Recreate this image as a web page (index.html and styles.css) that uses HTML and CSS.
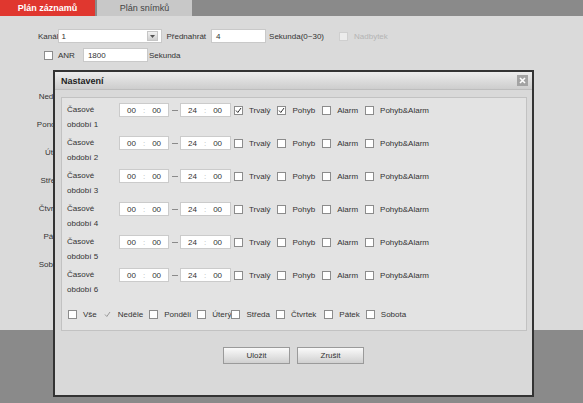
FILE: index.html
```html
<!DOCTYPE html>
<html lang="cs">
<head>
<meta charset="utf-8">
<title>Plán záznamů</title>
<link rel="stylesheet" href="styles.css">
</head>
<body>
<div class="page">
<div class="tabs">
  <div class="tab active">Plán záznamů</div>
  <div class="tab">Plán snímků</div>
</div>
<div class="content">
  <div class="form-row row1">
    <span class="lbl">Kanál</span>
    <div class="select"><span class="val">1</span><span class="arrow"><svg width="5" height="3" viewBox="0 0 5 3"><path d="M0 0h5L2.5 3z" fill="#555"/></svg></span></div>
    <span class="lbl pre">Přednahrát</span>
    <div class="field pre-field">4</div>
    <span class="lbl sec">Sekunda(0~30)</span>
    <span class="cb disabled extra-cb"></span>
    <span class="lbl muted">Nadbytek</span>
  </div>
  <div class="form-row row2">
    <span class="cb"></span>
    <span class="lbl anr">ANR</span>
    <div class="field anr-field">1800</div>
    <span class="lbl sec2">Sekunda</span>
  </div>
  <div class="days-bg">
    <div>Neděle</div>
    <div>Pondělí</div>
    <div>Úterý</div>
    <div>Středa</div>
    <div>Čtvrtek</div>
    <div>Pátek</div>
    <div>Sobota</div>
  </div>

  <div class="dialog">
    <div class="dlg-title">
      <span>Nastavení</span>
      <span class="close"><svg width="7" height="7" viewBox="0 0 7 7"><path d="M1 1l5 5M6 1L1 6" stroke="#fff" stroke-width="1.6"/></svg></span>
    </div>
    <div class="panel">
      <div class="period">
        <div class="plabel">Časové<br>období 1</div>
        <div class="controls">
          <div class="time"><span>00</span><span class="colon">:</span><span>00</span></div>
          <span class="dash"></span>
          <div class="time"><span>24</span><span class="colon">:</span><span>00</span></div>
          <span class="cb checked first"><svg width="7" height="7" viewBox="0 0 7 7"><path d="M1 3.5l1.8 2L6 1" fill="none" stroke="#333" stroke-width="1"/></svg></span><span class="opt">Trvalý</span>
          <span class="cb checked"><svg width="7" height="7" viewBox="0 0 7 7"><path d="M1 3.5l1.8 2L6 1" fill="none" stroke="#333" stroke-width="1"/></svg></span><span class="opt">Pohyb</span>
          <span class="cb"></span><span class="opt">Alarm</span>
          <span class="cb"></span><span class="opt">Pohyb&amp;Alarm</span>
        </div>
      </div>
      <div class="period">
        <div class="plabel">Časové<br>období 2</div>
        <div class="controls">
          <div class="time"><span>00</span><span class="colon">:</span><span>00</span></div>
          <span class="dash"></span>
          <div class="time"><span>24</span><span class="colon">:</span><span>00</span></div>
          <span class="cb first"></span><span class="opt">Trvalý</span>
          <span class="cb"></span><span class="opt">Pohyb</span>
          <span class="cb"></span><span class="opt">Alarm</span>
          <span class="cb"></span><span class="opt">Pohyb&amp;Alarm</span>
        </div>
      </div>
      <div class="period">
        <div class="plabel">Časové<br>období 3</div>
        <div class="controls">
          <div class="time"><span>00</span><span class="colon">:</span><span>00</span></div>
          <span class="dash"></span>
          <div class="time"><span>24</span><span class="colon">:</span><span>00</span></div>
          <span class="cb first"></span><span class="opt">Trvalý</span>
          <span class="cb"></span><span class="opt">Pohyb</span>
          <span class="cb"></span><span class="opt">Alarm</span>
          <span class="cb"></span><span class="opt">Pohyb&amp;Alarm</span>
        </div>
      </div>
      <div class="period">
        <div class="plabel">Časové<br>období 4</div>
        <div class="controls">
          <div class="time"><span>00</span><span class="colon">:</span><span>00</span></div>
          <span class="dash"></span>
          <div class="time"><span>24</span><span class="colon">:</span><span>00</span></div>
          <span class="cb first"></span><span class="opt">Trvalý</span>
          <span class="cb"></span><span class="opt">Pohyb</span>
          <span class="cb"></span><span class="opt">Alarm</span>
          <span class="cb"></span><span class="opt">Pohyb&amp;Alarm</span>
        </div>
      </div>
      <div class="period">
        <div class="plabel">Časové<br>období 5</div>
        <div class="controls">
          <div class="time"><span>00</span><span class="colon">:</span><span>00</span></div>
          <span class="dash"></span>
          <div class="time"><span>24</span><span class="colon">:</span><span>00</span></div>
          <span class="cb first"></span><span class="opt">Trvalý</span>
          <span class="cb"></span><span class="opt">Pohyb</span>
          <span class="cb"></span><span class="opt">Alarm</span>
          <span class="cb"></span><span class="opt">Pohyb&amp;Alarm</span>
        </div>
      </div>
      <div class="period">
        <div class="plabel">Časové<br>období 6</div>
        <div class="controls">
          <div class="time"><span>00</span><span class="colon">:</span><span>00</span></div>
          <span class="dash"></span>
          <div class="time"><span>24</span><span class="colon">:</span><span>00</span></div>
          <span class="cb first"></span><span class="opt">Trvalý</span>
          <span class="cb"></span><span class="opt">Pohyb</span>
          <span class="cb"></span><span class="opt">Alarm</span>
          <span class="cb"></span><span class="opt">Pohyb&amp;Alarm</span>
        </div>
      </div>
      <div class="weekdays">
        <span class="cb"></span><span class="day">Vše</span>
        <span class="cb ghost"><svg width="7" height="7" viewBox="0 0 7 7"><path d="M1 3.5l1.8 2L6 1" fill="none" stroke="#999" stroke-width="1"/></svg></span><span class="day">Neděle</span>
        <span class="cb"></span><span class="day">Pondělí</span>
        <span class="cb"></span><span class="day tight">Úterý</span>
        <span class="cb"></span><span class="day">Středa</span>
        <span class="cb"></span><span class="day wide">Čtvrtek</span>
        <span class="cb"></span><span class="day">Pátek</span>
        <span class="cb"></span><span class="day">Sobota</span>
      </div>
    </div>
    <div class="buttons">
      <button class="btn">Uložit</button>
      <button class="btn">Zrušit</button>
    </div>
  </div>
</div>
</div>
</body>
</html>
```

FILE: styles.css
```css
* { box-sizing: border-box; }

html, body {
  margin: 0;
  background: #8a8a8a;
}

body {
  font-family: "Liberation Sans", Arial, sans-serif;
  font-size: 8px;
  color: #333;
}

.page {
  min-height: 100vh;
  height: 403px;
  background: #8a8a8a;
}

.tabs {
  display: flex;
  gap: 2px;
  height: 16px;
  background: #8a8a8a;
}

.tab {
  width: 95px;
  display: flex;
  align-items: center;
  justify-content: center;
  background: #c8c8c8;
  color: #444;
  font-size: 9px;
}

.tab.active {
  background: #e0372f;
  color: #fff;
  font-weight: bold;
}

.content {
  position: relative;
  height: 314px;
  background: #dadada;
  padding-top: 13px;
}

.form-row {
  display: flex;
  align-items: center;
  height: 14px;
}

.row1 { padding-left: 38px; }
.row2 { padding-left: 44px; margin-top: 5px; }

.lbl { white-space: nowrap; }
.lbl.pre { margin-left: 4px; }
.lbl.sec { margin-left: 3px; }
.lbl.muted { margin-left: 6px; color: #b4b4b4; }
.lbl.anr { margin-left: 5px; }
.lbl.sec2 { margin-left: 1px; }

.select {
  width: 104px;
  height: 14px;
  background: #fff;
  border: 1px solid #c9c9c9;
  display: flex;
  align-items: center;
  justify-content: space-between;
  padding: 0 3px 0 2px;
}

.arrow {
  width: 11px;
  height: 10px;
  background: linear-gradient(#f2f2f2, #cfcfcf);
  border: 1px solid #c6c6c6;
  display: flex;
  align-items: center;
  justify-content: center;
}

.field {
  height: 14px;
  background: #fff;
  border: 1px solid #c9c9c9;
  display: flex;
  align-items: center;
  padding-left: 4px;
}

.pre-field { width: 55px; margin-left: 5px; }
.anr-field { width: 65px; margin-left: 8px; }

.cb {
  width: 9px;
  height: 9px;
  flex: none;
  background: #fff;
  border: 1px solid #8c8c8c;
  display: inline-flex;
  align-items: center;
  justify-content: center;
}

.cb.disabled {
  border-color: #cfcfcf;
  background: #ececec;
}

.extra-cb { margin-left: 15px; }

.cb.ghost {
  background: transparent;
  border-color: transparent;
}

.days-bg {
  margin-top: 21px;
  width: 64px;
  text-align: right;
}

.days-bg div {
  height: 28px;
  line-height: 28px;
}

.dialog {
  position: absolute;
  z-index: 10;
  left: 53px;
  top: 54px;
  width: 481px;
  height: 327px;
  background: #d9d9d9;
  border: 2px solid #333;
}

.dlg-title {
  height: 18px;
  display: flex;
  align-items: center;
  justify-content: space-between;
  padding: 0 4px 0 6px;
  background: linear-gradient(#ececec, #cdcdcd);
  border-bottom: 1px solid #bdbdbd;
  font-size: 9px;
  font-weight: bold;
  color: #222;
}

.close {
  width: 11px;
  height: 11px;
  background: #a3a3a3;
  display: flex;
  align-items: center;
  justify-content: center;
}

.panel {
  margin: 7px 5px 0 6px;
  height: 234px;
  background: #e3e3e3;
  border: 1px solid #c2c2c2;
  padding: 4px 0 0 5px;
}

.period {
  display: flex;
  align-items: flex-start;
  height: 33px;
}

.plabel {
  width: 52px;
  line-height: 15px;
  flex: none;
}

.controls {
  display: flex;
  align-items: center;
  height: 14px;
  margin-top: 1px;
}

.time {
  width: 50px;
  height: 14px;
  background: #fff;
  border: 1px solid #cbcbcb;
  display: flex;
  align-items: center;
  gap: 7px;
  padding-left: 7px;
}

.time + .dash + .time { width: 51px; }

.colon { color: #b5b5b5; }

.dash {
  width: 6px;
  height: 1px;
  background: #8a8a8a;
  margin: 0 2px 0 3px;
}

.cb.first { margin-left: 3px; }

.opt {
  margin: 0 7px 0 6px;
  white-space: nowrap;
}

.weekdays {
  display: flex;
  align-items: center;
  height: 16px;
  margin-top: 6px;
  padding-left: 1px;
}

.day {
  margin: 0 6px;
  white-space: nowrap;
}

.day.tight { margin-right: 0; }
.day.wide { margin-right: 8px; }

.buttons {
  display: flex;
  justify-content: center;
  gap: 7px;
  margin-top: 16px;
}

.btn {
  width: 67px;
  height: 17px;
  padding: 0;
  font-family: "Liberation Sans", Arial, sans-serif;
  font-size: 8px;
  color: #333;
  background: linear-gradient(#fafafa, #d0d0d0);
  border: 1px solid #9a9a9a;
  border-radius: 0;
}
```
